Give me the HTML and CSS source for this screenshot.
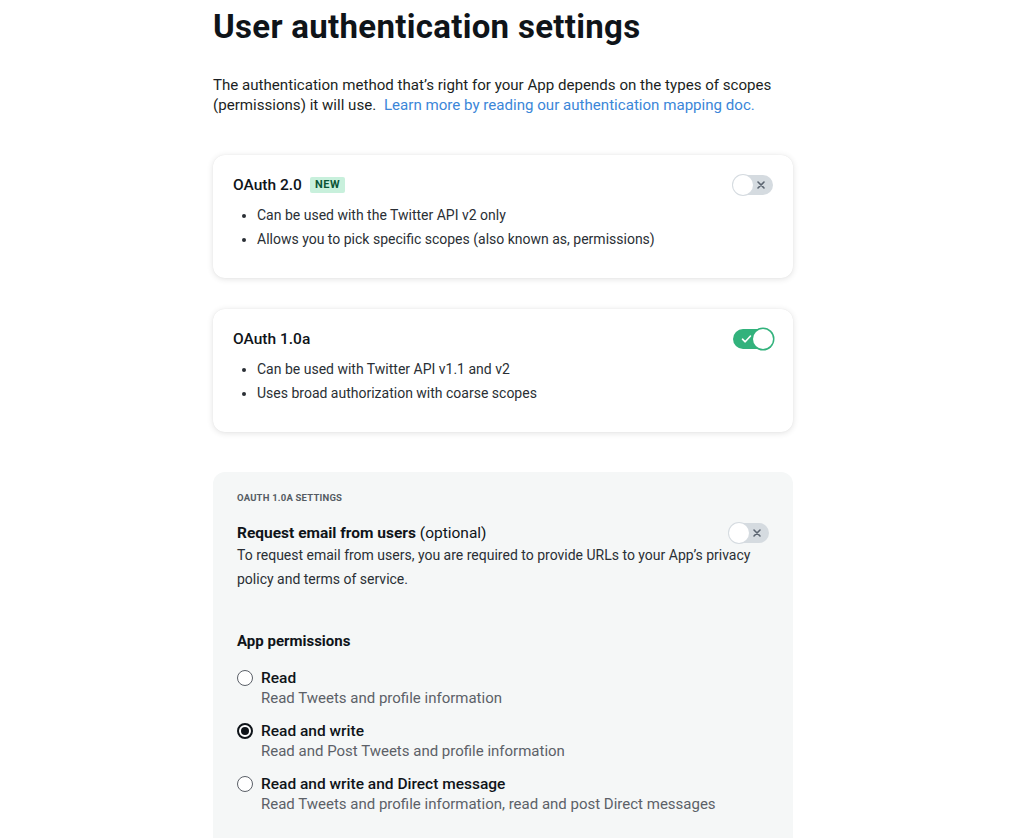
FILE: index.html
```html
<!DOCTYPE html>
<html>
<head>
<meta charset="utf-8">
<link rel="stylesheet" href="styles.css">
</head>
<body>
<main class="page">
  <h1 class="title">User authentication settings</h1>
  <p class="intro"><span class="intro-line">The authentication method that’s right for your App depends on the types of scopes</span><span>(permissions) it will use.</span> <a class="link" href="#">Learn more by reading our authentication mapping doc.</a></p>

  <section class="card">
    <div class="card-head">
      <div class="card-title">OAuth 2.0 <span class="badge">NEW</span></div>
      <span class="toggle off"><span class="knob"></span><svg class="mark" width="10" height="10" viewBox="0 0 10 10"><path d="M2 2L8 8M8 2L2 8" stroke="#5b6470" stroke-width="1.6" stroke-linecap="round"/></svg></span>
    </div>
    <ul class="bullets">
      <li>Can be used with the Twitter API v2 only</li>
      <li>Allows you to pick specific scopes (also known as, permissions)</li>
    </ul>
  </section>

  <section class="card">
    <div class="card-head">
      <div class="card-title">OAuth 1.0a</div>
      <span class="toggle on"><svg class="mark" width="11" height="10" viewBox="0 0 11 10"><path d="M1.5 5.2L4.2 7.8L9.5 2" fill="none" stroke="#fff" stroke-width="1.6" stroke-linecap="round" stroke-linejoin="round"/></svg><span class="knob"></span></span>
    </div>
    <ul class="bullets">
      <li>Can be used with Twitter API v1.1 and v2</li>
      <li>Uses broad authorization with coarse scopes</li>
    </ul>
  </section>

  <section class="settings">
    <div class="eyebrow">OAUTH 1.0A SETTINGS</div>
    <div class="email-row">
      <div class="email-title"><b>Request email from users</b> (optional)</div>
      <span class="toggle off"><span class="knob"></span><svg class="mark" width="10" height="10" viewBox="0 0 10 10"><path d="M2 2L8 8M8 2L2 8" stroke="#5b6470" stroke-width="1.6" stroke-linecap="round"/></svg></span>
    </div>
    <p class="email-desc">To request email from users, you are required to provide URLs to your App’s privacy policy and terms of service.</p>

    <h2 class="perm-title">App permissions</h2>
    <div class="radios">
      <div class="radio">
        <span class="circle"></span>
        <div class="radio-text">
          <div class="radio-label">Read</div>
          <div class="radio-sub">Read Tweets and profile information</div>
        </div>
      </div>
      <div class="radio">
        <span class="circle checked"></span>
        <div class="radio-text">
          <div class="radio-label">Read and write</div>
          <div class="radio-sub">Read and Post Tweets and profile information</div>
        </div>
      </div>
      <div class="radio">
        <span class="circle"></span>
        <div class="radio-text">
          <div class="radio-label">Read and write and Direct message</div>
          <div class="radio-sub">Read Tweets and profile information, read and post Direct messages</div>
        </div>
      </div>
    </div>
  </section>
</main>
</body>
</html>
```
FILE: styles.css
```css
* { box-sizing: border-box; }
html, body { margin: 0; padding: 0; background: #fff; }
body {
  font-family: Roboto, "Liberation Sans", Arial, sans-serif;
  color: #0f1419;
  overflow: hidden;
}
.page {
  width: 580px;
  margin-left: 213px;
  padding-top: 8px;
}
.title {
  font-size: 33px;
  font-weight: 700;
  margin: 0;
  line-height: 38px;
  letter-spacing: 0.3px;
}
.intro {
  margin: 29px 0 0;
  font-size: 15.1px;
  line-height: 20px;
  color: #1b1f23;
}
.intro-line { display: block; }
.link { color: #3b86d8; text-decoration: none; padding-left: 4px; }
.card {
  margin-top: 40px;
  background: #fff;
  border-radius: 12px;
  box-shadow: 0 1px 6px rgba(0,0,0,0.12), 0 0 1px rgba(0,0,0,0.08);
  padding: 20px 20px 22px;
  height: 123px;
}
.card + .card { margin-top: 31px; }
.card-head {
  display: flex;
  justify-content: space-between;
  align-items: center;
  height: 20px;
}
.card-title {
  font-size: 15.5px;
  font-weight: 500;
  display: flex;
  align-items: center;
  gap: 8px;
  color: #0f1419;
}
.badge {
  background: #c8f0dc;
  color: #0b5536;
  font-size: 11px;
  font-weight: 700;
  padding: 1px 5px;
  border-radius: 2px;
  letter-spacing: 0.6px;
  line-height: 14px;
}
.bullets {
  margin: 8px 0 0;
  padding-left: 24px;
  font-size: 14px;
  line-height: 24px;
  color: #2a2f35;
}
.toggle {
  width: 40px;
  height: 20px;
  border-radius: 10px;
  display: flex;
  align-items: center;
  justify-content: space-between;
  padding: 0 7px 0 0;
  position: relative;
}
.toggle.off { background: #d5dbe0; }
.toggle.on { background: #32b27c; padding: 0 0 0 8px; }
.knob {
  width: 20px;
  height: 20px;
  border-radius: 50%;
  background: #fff;
  box-shadow: 0 0 0 1px #d5dbe0;
}
.toggle.on .knob { box-shadow: 0 0 0 1.5px #32b27c; }
.mark { display: block; }
.settings {
  margin-top: 40px;
  background: #f5f7f7;
  border-radius: 12px;
  padding: 20px 24px 30px;
  height: 400px;
}
.eyebrow {
  font-size: 9.5px;
  font-weight: 700;
  color: #555c63;
  letter-spacing: 0.2px;
  line-height: 12px;
}
.email-row {
  margin-top: 18px;
  display: flex;
  justify-content: space-between;
  align-items: center;
  height: 22px;
}
.email-title {
  font-size: 15.5px;
  color: #0f1419;
}
.email-title b { font-weight: 700; }
.email-desc {
  margin: -1px 0 0;
  font-size: 14px;
  line-height: 24px;
  color: #2a2f35;
  padding-right: 10px;
}
.perm-title {
  margin: 40px 0 0;
  font-size: 15px;
  font-weight: 700;
  line-height: 20px;
}
.radios {
  margin-top: 17px;
  display: flex;
  flex-direction: column;
  gap: 13px;
}
.radio {
  display: flex;
  gap: 8px;
}
.circle {
  width: 16px;
  height: 16px;
  border-radius: 50%;
  border: 1px solid #5b6068;
  background: #fff;
  margin-top: 2px;
  flex: none;
  position: relative;
}
.circle.checked {
  border: 2px solid #0f1419;
}
.circle.checked::after {
  content: "";
  position: absolute;
  left: 2px; top: 2px;
  width: 8px; height: 8px;
  border-radius: 50%;
  background: #0f1419;
}
.radio-label {
  font-size: 15.5px;
  font-weight: 500;
  line-height: 20px;
}
.radio-sub {
  font-size: 15px;
  line-height: 20px;
  color: #5c6168;
}
```
